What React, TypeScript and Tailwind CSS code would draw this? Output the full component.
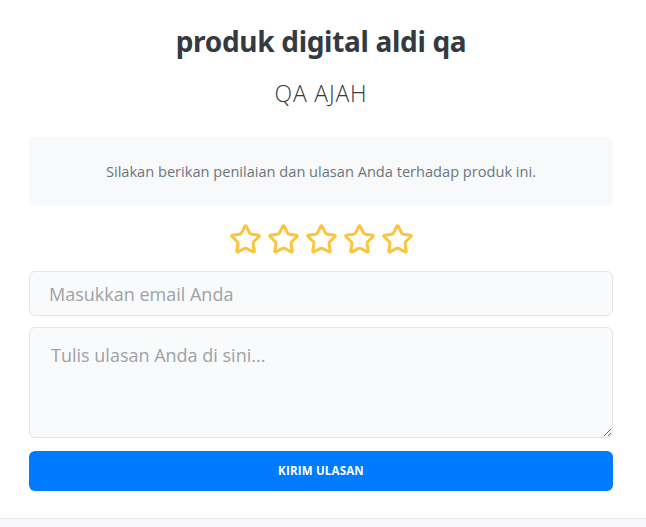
import React, { useState } from "react";
import { Star } from "lucide-react";

export default function App() {
  const [rating, setRating] = useState(0);

  return (
    <div className="min-h-[527px] bg-white flex flex-col" style={{ fontFamily: '"Open Sans", "Noto Sans", sans-serif' }}>
      <div className="flex-1 pl-[29px] pr-[33px] pt-[22px]">
        {/* Header */}
        <h1 className="text-center text-[28px] leading-[38px] font-bold text-[#343a40] tracking-[-0.3px]" style={{ fontFamily: '"Noto Sans", "Open Sans", sans-serif' }}>
          produk digital aldi qa
        </h1>
        <h2 className="mt-[19px] text-center text-[23px] leading-[28px] font-light text-[#343a40] tracking-[0.8px]" style={{ fontFamily: '"Open Sans", "Noto Sans", sans-serif' }}>
          QA AJAH
        </h2>

        {/* Info box */}
        <div className="mt-[30px] h-[69px] rounded-md bg-[#f8f9fa] flex items-center justify-center">
          <p className="text-[14.6px] text-[#6c757d]">Silakan berikan penilaian dan ulasan Anda terhadap produk ini.</p>
        </div>

        {/* Stars */}
        <div className="mt-[17px] flex justify-center gap-[5px]">
          {[1, 2, 3, 4, 5].map((n) => (
            <button key={n} onClick={() => setRating(n)} className="cursor-pointer">
              <Star
                className="w-[33px] h-[33px] text-[#fbc53b]"
                strokeWidth={2.2}
                fill={n <= rating ? "#fbc53b" : "none"}
              />
            </button>
          ))}
        </div>

        {/* Form */}
        <form className="mt-[15px] flex flex-col" onSubmit={(e) => e.preventDefault()}>
          <input
            type="email"
            placeholder="Masukkan email Anda"
            className="h-[45px] w-full rounded-md border border-[#e3e7eb] bg-[#f9fafb] px-[19px] text-[18px] text-[#495057] placeholder:text-[#9ea2a6] outline-none"
          />
          <textarea
            placeholder="Tulis ulasan Anda di sini..."
            className="mt-[11px] h-[111px] w-full rounded-md border border-[#e3e7eb] bg-[#f9fafb] px-[21px] pt-[13px] pb-[12px] text-[18px] leading-[28px] text-[#495057] placeholder:text-[#9ea2a6] outline-none"
          />
          <button
            type="submit"
            className="mt-[13px] h-[40px] w-full rounded-md bg-[#007bff] text-[11.5px] font-bold text-white tracking-[0.2px]"
          >
            KIRIM ULASAN
          </button>
        </form>
      </div>

      {/* Footer strip */}
      <div className="h-[9px] border-t border-[#e5e9ee] bg-[#f7f8fa]" />
    </div>
  );
}
